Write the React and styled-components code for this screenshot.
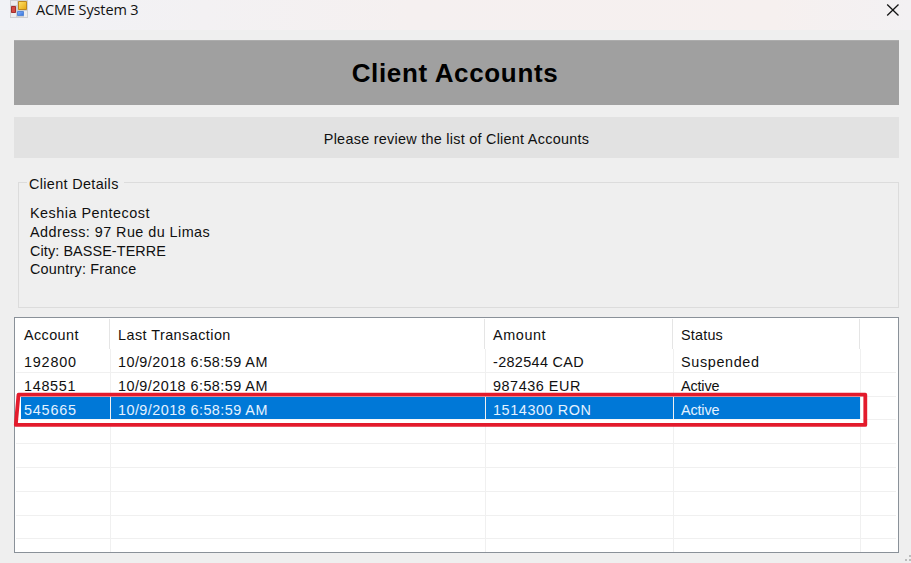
import React from "react";
import styled, { createGlobalStyle } from "styled-components";

const GlobalStyle = createGlobalStyle`
  * { box-sizing: border-box; }
  body { margin: 0; background: #efefef; overflow: hidden; }
`;

const Window = styled.div`
  position: relative;
  width: 911px;
  height: 563px;
  overflow: hidden;
  display: flex;
  flex-direction: column;
  background: #efefef;
  color: #101010;
  font: 14.4px/19px "Liberation Sans", Arial, sans-serif;
  white-space: pre;
`;

const TitleBar = styled.header`
  display: flex;
  flex: none;
  justify-content: space-between;
  height: 30px;
  padding: 0 11px 0 10px;
  background: linear-gradient(90deg, #f1f2f6 0%, #f5f0f0 45%, #f6f0ef 85%, #f3f1f3 100%);
`;

const TitleGroup = styled.div`
  display: flex;
  gap: 8px;
`;

const Title = styled.span`
  font: 14.5px/20px "Open Sans", "Noto Sans", sans-serif;
  letter-spacing: ${(p) => p.$spacing}px;
  color: #111;
`;

const CloseIcon = styled.svg`
  margin-top: 3px;
`;

const Content = styled.main`
  display: flex;
  flex-direction: column;
  padding: 10px 12px 0 14px;
`;

const Banner = styled.h1`
  margin: 0 0 12px;
  height: 65px;
  padding-right: 3px;
  text-align: center;
  font-size: 26px;
  font-weight: bold;
  line-height: 65px;
  letter-spacing: 0.65px;
  color: #000;
  background: #a0a0a0;
  border-top: 1px solid #acacac;
`;

const Notice = styled.div`
  height: 41px;
  text-align: center;
  line-height: 44px;
  background: #e2e2e2;
`;

const Text = styled.span`
  letter-spacing: ${(p) => p.$spacing || 0}px;
`;

const Details = styled.fieldset`
  margin: 17px 0 0 4px;
  height: 133px;
  min-width: 0;
  padding: 10px 0 0 11px;
  border: 1px solid #dcdcdc;
  line-height: 19px;
`;

const Legend = styled.legend`
  height: 14px;
  margin-left: -3px;
  padding: 0 5px 0 2px;
  line-height: 18px;
`;

const DetailLine = styled.div`
  height: 18.8px;
  letter-spacing: ${(p) => p.$spacing}px;

  &:first-of-type { margin-top: 5px; }
`;

const Table = styled.section`
  height: 236px;
  margin-top: 9px;
  background: #fff;
  border: 1px solid #8a9199;
  overflow: hidden;
  padding: 1px 2px 0 1px;
`;

const HeaderRow = styled.div`
  display: grid;
  grid-template-columns: 94px 375px 188px 187px 1fr;
  grid-template-rows: 30px;
`;

const HeaderCell = styled.div`
  padding-left: 8px;
  line-height: 33px;
  border-right: 1px solid ${(p) => (p.$last ? "transparent" : "#e5e5e5")};
`;

const Rows = styled.div`
  display: grid;
  grid-auto-rows: 23.8px;
`;

const Row = styled.div`
  display: grid;
  grid-template-columns: 95px 375px 188px 187px 1fr;
  grid-template-rows: 22.8px;
  color: ${(p) => (p.$selected ? "#e4f2ff" : "inherit")};
  border-bottom: 1px solid #f0f0f0;
`;

const Cell = styled.div`
  min-width: 0;
  padding-left: ${(p) => (p.$first ? 8 : 7)}px;
  line-height: 27px;
  background: ${(p) => (p.$selected ? "#0078d7" : "transparent")};
  margin-left: ${(p) => (p.$selected && p.$first ? 5 : 0)}px;
  text-indent: ${(p) => (p.$selected && p.$first ? -5 : 0)}px;
  border-right: 1px solid ${(p) => (p.$last ? "transparent" : "#f0f0f0")};
`;

const Highlight = styled.svg`
  position: absolute;
  left: 12px;
  top: 390px;
`;

const ResizeGrip = styled.svg`
  position: absolute;
  right: 0;
  bottom: 0;
`;

const columns = [["Account", 0.4], ["Last Transaction", 0.45], ["Amount", 0.6], ["Status", 0.2], ["", 0]];
const accounts = [
  [["192800", 0.8], ["10/9/2018 6:58:59 AM", 0.45], ["-282544 CAD", 0.35], ["Suspended", 0.65]],
  [["148551", 0.7], ["10/9/2018 6:58:59 AM", 0.45], ["987436 EUR", 0.55], ["Active", -0.15]],
  [["545665", 0.8], ["10/9/2018 6:58:59 AM", 0.45], ["1514300 RON", 0.6], ["Active", -0.15]],
  [], [], [], [], [], [],
];
const details = [
  ["Keshia Pentecost", 0.5],
  ["Address: 97 Rue du Limas", 0.44],
  ["City: BASSE-TERRE", 0.1],
  ["Country: France", 0.22],
];

function FormIcon() {
  return (
    <svg width="18" height="18" viewBox="0 0 18 18">
      <defs>
        <linearGradient id="gold" x2="1" y2="1"><stop stopColor="#ffe36a" /><stop offset="1" stopColor="#e6a60c" /></linearGradient>
        <linearGradient id="blue" x2="1" y2="1"><stop stopColor="#8ab5fa" /><stop offset="1" stopColor="#3271dc" /></linearGradient>
      </defs>
      <path d="M0 0h18v18H0z" fill="#cfd0d2" />
      <path d="M1 1h6v4H1zM1 13h5v4H1zM14 12h3v5h-3zM7 11h10v1H7z" fill="#ededee" />
      <path d="M1.5 6.5h4v6h-4z" fill="#d34a42" stroke="#a52f2b" />
      <path d="M8.5 1.5h8v8h-8z" fill="url(#gold)" stroke="#be871c" />
      <path d="M7.5 11.5h6v4h-6z" fill="url(#blue)" stroke="#5688d7" />
    </svg>
  );
}

export default function App() {
  return (
    <>
      <GlobalStyle />
      <Window>
        <TitleBar>
          <TitleGroup>
            <FormIcon />
            <Title $spacing={-0.12}>ACME System 3</Title>
          </TitleGroup>
          <CloseIcon width="14" height="14" viewBox="0 0 14 14">
            <path d="M1.2 1.5l11.3 11M12.5 1.5l-11.3 11" stroke="#151515" strokeWidth="1.3" fill="none" />
          </CloseIcon>
        </TitleBar>
        <Content>
          <Banner>Client Accounts</Banner>
          <Notice><Text $spacing={0.27}>Please review the list of Client Accounts</Text></Notice>
          <Details>
            <Legend><Text $spacing={0.35}>Client Details</Text></Legend>
            {details.map(([text, spacing]) => (
              <DetailLine key={text} $spacing={spacing}>{text}</DetailLine>
            ))}
          </Details>
          <Table>
            <HeaderRow>
              {columns.map(([text, spacing], i) => (
                <HeaderCell key={i} $last={i === 4}><Text $spacing={spacing}>{text}</Text></HeaderCell>
              ))}
            </HeaderRow>
            <Rows>
              {accounts.map((row, r) => (
                <Row key={r} $selected={r === 2}>
                  {columns.map((_, c) => (
                    <Cell key={c} $first={c === 0} $last={c === 4} $selected={r === 2 && c < 4}>
                      {row[c] && <Text $spacing={row[c][1]}>{row[c][0]}</Text>}
                    </Cell>
                  ))}
                </Row>
              ))}
            </Rows>
          </Table>
        </Content>
        <Highlight width="860" height="40" viewBox="0 0 860 40">
          <path d="M6.5 32H851.5" stroke="#fff" strokeWidth="5" />
          <path d="M6.5 4.7H853.3V34.9H3.8L6.5 4.7Z" fill="none" stroke="#e31b2c" strokeWidth="3.8" strokeLinejoin="round" />
        </Highlight>
        <ResizeGrip width="6" height="9" viewBox="0 0 6 9">
          <path d="M4 1h2v2H4zM0 5h2v2H0zM4 5h2v2H4z" fill="#bdbdbd" />
        </ResizeGrip>
      </Window>
    </>
  );
}
